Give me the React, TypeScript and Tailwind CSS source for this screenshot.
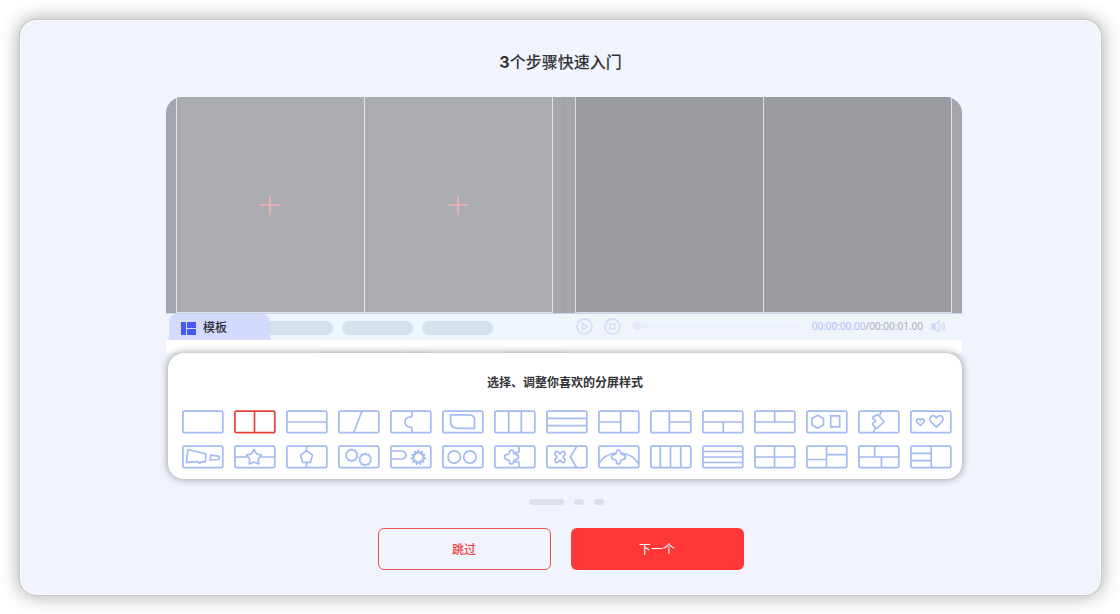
import * as React from "react";

// Points of a regular star; with r === R it is a plain polygon
function star(cx: number, cy: number, R: number, r: number, tips: number, turn = -90) {
  return Array.from({ length: tips * 2 }, (_, i) => {
    const a = ((turn + (i * 180) / tips) * Math.PI) / 180;
    const d = i % 2 ? r : R;
    return `${(cx + d * Math.cos(a)).toFixed(1)},${(cy + d * Math.sin(a)).toFixed(1)}`;
  }).join(" ");
}

const clover =
  "M0-7C1.6-7 2-5.8 2.1-4.6Q2.4-3 3.4-2.8C5.500-2.5 7-1.8 7 0C7 1.8 5.5 2.5 3.4 2.8Q2.4 3 2.1 4.6C2 5.8 1.6 7 0 7C-1.6 7-2 5.8-2.1 4.6Q-2.4 3-3.4 2.8C-5.5 2.5-7 1.8-7 0C-7-1.8-5.5-2.5-3.4-2.8Q-2.4-3-2.1-4.6C-2-5.8-1.6-7 0-7Z";

const quatrefoil =
  "M0-3.2C1-4.6 2.8-6.3 4.4-5.2C6-3.800 4.6-1.6 3 0C4.6 1.6 6 3.8 4.4 5.2C2.8 6.3 1 4.6 0 3.2C-1 4.6-2.8 6.3-4.4 5.2C-6 3.8-4.6 1.6-3 0C-4.6-1.6-6-3.8-4.4-5.2C-2.8-6.3-1-4.6 0-3.2Z";

const templates: { name: string; art: React.ReactNode }[] = [
  { name: "单屏", art: null },
  { name: "左右分屏", art: <path d="M20.5 1v22" /> },
  { name: "上下分屏", art: <path d="M1 12h40" /> },
  { name: "斜线分屏", art: <path d="M24 1L15.5 23" /> },
  { name: "拼图分屏", art: <path d="M22 1v4.5q0 1.5-2 1.5a4.8 4.8 0 0 0 0 10q2 0 2 1.5V23" /> },
  { name: "叶形", art: <path d="M8.5 4.8H27q5.5 0 5.5 5.500v8H16q-7.5 0-7.5-7z" /> },
  { name: "三列", art: <path d="M14.7 1v22M27.3 1v22" /> },
  { name: "三行", art: <path d="M1 8.3h40M1 15.7h40" /> },
  { name: "左二右一", art: <path d="M22.7 1v22M1 12h21.7" /> },
  { name: "左一右二", art: <path d="M19.3 1v22M19.3 12H41" /> },
  { name: "上一下二", art: <path d="M1 12h40M21.3 12v11" /> },
  { name: "上二下一", art: <path d="M1 12h40M20.7 1v11" /> },
  {
    name: "六边形与矩形",
    art: (
      <>
        <path d="M11.7 5.2l5.8 3.2v6.6l-5.8 3.2-5.8-3.2V8.4z" />
        <path d="M24.7 5.9h9v11h-9z" />
      </>
    ),
  },
  {
    name: "心形分屏",
    art: <path d="M23.3 1l-1.5 4.2M19.5 4.5l6.7 7-6.7 6.4q-1.8.8-3-1t-2-2.6q-.2-1 1.2-1.8t2-1.3q-.3-1.5-1.7-1.9t-1.5-1.6q1-1.4 2.1-1.6t2.9-1.6zM17.2 17.6L15.2 23" />,
  },
  {
    name: "双心",
    art: (
      <>
        <path d="M10.4 15.5L7.4 12.7C5.7 11 6.8 8.8 8.5 8.8q1.3 0 1.9 1.2.7-1.2 2-1.2c1.7 0 2.7 2.2 1 3.9z" />
        <path d="M26.4 17.2l-5.1-5C18.4 9 20.2 5.6 23 5.6q2.3 0 3.4 2.2 1.2-2.2 3.5-2.2c2.8 0 4.5 3.4 1.6 6.6z" />
      </>
    ),
  },
  {
    name: "梯形",
    art: (
      <path d="M6 4.5l18 4.3-.6 8h-4l-1.7 1.5-1.6-1.7-11.7.7zM28.8 10.2l8.5 1.2-.3 3.1-8.9.5z" />
    ),
  },
  {
    name: "星形",
    art: (
      <>
        <path d="M1 12h12.5M26.5 12H41" />
        <polygon points={star(20, 12.5, 8, 4.5, 5)} />
      </>
    ),
  },
  {
    name: "五边形",
    art: (
      <>
        <path d="M20.5 1v4.5M20.5 17.5V23" />
        <path d="M20.5 5.6l6 4.6-2.2 7.2h-7.6l-2.2-7.2z" />
      </>
    ),
  },
  {
    name: "双齿轮",
    art: (
      <>
        <polygon points={star(13.7, 10.3, 6, 5.2, 10)} />
        <polygon points={star(27.2, 14.5, 6, 5.2, 10)} />
      </>
    ),
  },
  {
    name: "标签与太阳",
    art: (
      <>
        <path d="M1 6h11.5q3.5 1 3.5 4t-3.5 4H1" />
        <polygon points={star(28.4, 12.4, 7, 4.3, 11)} />
      </>
    ),
  },
  {
    name: "双圆",
    art: (
      <>
        <circle cx="12.2" cy="12" r="6.2" />
        <circle cx="27.9" cy="12" r="6.2" />
      </>
    ),
  },
  {
    name: "花形分屏",
    art: (
      <>
        <path d={clover} transform="translate(17.5 12)" />
        <path d="M25 1v5.5q-.3 1.5-2 1t-2.4.7M25 23v-5q-.3-1.7-2-1.3t-2.4-.7" />
      </>
    ),
  },
  {
    name: "花形与箭头",
    art: (
      <>
        <path d={quatrefoil} transform="translate(14 12)" />
        <path d="M31 1l-6.7 11L31 23" />
      </>
    ),
  },
  {
    name: "弧形花",
    art: (
      <>
        <path d="M1 18.5Q6.5 9.3 17.5 8M23.5 8Q34.5 9.3 40.5 18.5" />
        <path d={clover} transform="translate(20.5 12)" />
      </>
    ),
  },
  { name: "四列", art: <path d="M10.3 1v22M20.5 1v22M30.7 1v22" /> },
  { name: "四行", art: <path d="M1 6.5h40M1 12h40M1 17.5h40" /> },
  { name: "四格", art: <path d="M20.5 1v22M1 12h40" /> },
  { name: "错位四格", art: <path d="M20.5 1v22M1 14.5h19.5M20.5 9.7H41" /> },
  { name: "砖形四格", art: <path d="M1 12h40M16.7 1v11M23.5 12v11" /> },
  { name: "左三右一", art: <path d="M21.3 1v22M1 8.3h20.3M1 15.7h20.3" /> },
];

function TemplateButton({ name, active, onClick, children }: {
  name: string;
  active: boolean;
  onClick: () => void;
  children: React.ReactNode;
}) {
  return (
    <button
      aria-label={name}
      aria-pressed={active}
      onClick={onClick}
      className={active ? "text-[#e5403c]" : "text-[#a3bbf2]"}
    >
      <svg
        viewBox="0 0 42 24"
        className="block h-6 w-[42px]"
        fill="none"
        stroke="currentColor"
        strokeWidth="1.7"
        strokeLinejoin="round"
      >
        <rect x="0.9" y="1.2" width="39.9" height="21.4" rx="1.2" />
        {children}
      </svg>
    </button>
  );
}

function Plus() {
  return (
    <svg viewBox="0 0 20 20" className="h-5 w-5" stroke="#f4b4b7" strokeWidth="1.5">
      <path d="M10 0v20M0 10h20" />
    </svg>
  );
}

function Preview() {
  return (
    <div className="flex h-[216px] overflow-hidden rounded-t-2xl">
      <div className="w-1/2 bg-[#a5a6ab] pl-[10px] pr-[11px]">
        <div className="grid h-full grid-cols-2 divide-x divide-[#e3e4e8] border-x border-b border-[#e3e4e8] bg-[#abacb1]">
          <button aria-label="添加左侧视频" className="flex items-center justify-center"><Plus /></button>
          <button aria-label="添加右侧视频" className="flex items-center justify-center"><Plus /></button>
        </div>
      </div>
      <div className="w-1/2 border-l border-[#9d9ea3] bg-[#a5a6ab] pl-[10px] pr-[10px]">
        <div className="grid h-full grid-cols-2 divide-x divide-[#dcdde1] border-x border-b border-[#dcdde1] bg-[#9b9ca1]">
          <div />
          <div />
        </div>
      </div>
    </div>
  );
}

function Toolbar() {
  return (
    <div className="flex h-[27px] border-t border-[#c9d5ee]">
      <div className="flex w-1/2 items-center bg-[#eef6fe]">
        <div className="z-10 flex h-full items-end">
          <svg viewBox="0 0 3 4" className="h-1 w-[3px]" fill="#d4d9fe"><path d="M3 0v4H0q3-.5 3-4z" /></svg>
          <button className="flex h-full w-[101px] items-center gap-[7px] rounded-t-lg bg-[#d4d9fe] pl-3 pt-0.5 text-xs font-medium text-[#2b2d33]">
            <svg viewBox="0 0 15 13" className="h-[13px] w-[15px]" fill="#4458fb">
              <path d="M0 0h5v13H0zM6 0h9v6H6zM6 7h9v6H6z" />
            </svg>
            模板
          </button>
          <svg viewBox="0 0 3 4" className="h-1 w-[3px]" fill="#d4d9fe"><path d="M0 0v4h3q-3-.5-3-4z" /></svg>
        </div>
        <div className="-ml-[11px] flex gap-[9px] pt-0.5">
          <div className="h-[14px] w-[71px] rounded-full bg-[#d5e1ec]" />
          <div className="h-[14px] w-[71px] rounded-full bg-[#d5e1ec]" />
          <div className="h-[14px] w-[71px] rounded-full bg-[#d5e1ec]" />
        </div>
      </div>

      <div className="flex w-1/2 items-center bg-[#eff5fb] pb-0.5 pl-3 pr-4">
        <button aria-label="播放">
          <svg viewBox="0 0 17 17" className="block h-[17px] w-[17px]" fill="none" stroke="#d3daf9" strokeWidth="1.5">
            <circle cx="8.5" cy="8.5" r="7.500" />
            <path d="M6.5 5.3v6.4l5-3.2z" />
          </svg>
        </button>
        <button aria-label="停止" className="ml-[11px]">
          <svg viewBox="0 0 17 17" className="block h-[17px] w-[17px]" fill="none" stroke="#d3daf9" strokeWidth="1.5">
            <circle cx="8.5" cy="8.5" r="7.5" />
            <path d="M6 6h5v5H6z" />
          </svg>
        </button>
        <div className="ml-3 flex flex-1 items-center">
          <div className="h-2 w-2 rounded-full bg-[#e2e8f5]" />
          <div className="h-[3px] flex-1 bg-[#e9f0fa]" />
        </div>
        <div className="ml-[14px] font-['Noto_Sans',sans-serif] text-[10px] text-[#a9adb4]">
          <span className="text-[#afbdfb]">00:00:00.00</span>/00:00:01.00
        </div>
        <button aria-label="音量" className="ml-2">
          <svg viewBox="0 0 15 13" className="block h-[13px] w-[15px]" fill="none" stroke="#ced8f8" strokeWidth="1.3">
            <path d="M1 4h2.5v5H1z" fill="#ced8f8" />
            <path d="M4 4l4-3v11L4 9zM10.3 4.3q1.5 2.2 0 4.4M12.3 2.500q2.5 4 0 8" />
          </svg>
        </button>
      </div>
    </div>
  );
}

export default function App() {
  const [selected, setSelected] = React.useState(1);

  return (
    <main className="bg-white pb-[18px] pl-5 pr-[19px] pt-5 font-['Inter','Noto_Sans_CJK_SC',sans-serif] text-[#333438]">
      <section
        aria-labelledby="guide-title"
        className="rounded-2xl border border-[#fbfcff] bg-[#f1f4fc] pb-6 pt-[29px] shadow-[0_0_0_1px_#c9cacf,0_0_20px_rgba(0,0,0,0.38)]"
      >
        <h1 id="guide-title" className="text-center text-base font-medium">
          <span className="font-bold">3</span>个步骤快速入门
        </h1>

        <div className="mt-[23px] pl-[145px] pr-[138px]">
          <Preview />
          <Toolbar />
          {/* top of the timeline, mostly hidden by the panel */}
          <div className="flex h-[13px] items-end bg-white pl-[151px]">
            <div className="h-0.5 w-[65px] bg-[#f5f5f6]" />
            <div className="ml-1 h-0.5 w-[18px] bg-[#f5f5f6]" />
            <div className="ml-1 h-0.5 w-[21px] bg-[#f5f5f6]" />
            <div className="ml-[73px] h-0.5 w-[62px] bg-[#f5f5f6]" />
          </div>

          <div className="relative ml-0.5 rounded-2xl bg-white pb-[10px] pt-5 shadow-[0_0_7px_1px_rgba(0,0,0,0.32)]">
            <h2 className="text-center text-xs leading-5 font-bold">选择、调整你喜欢的分屏样式</h2>
            <div className="mt-[17px] grid grid-cols-[repeat(15,42px)] justify-between gap-y-[11px] pl-[14px] pr-[10px]">
              {templates.map((t, i) => (
                <TemplateButton key={t.name} name={t.name} active={i === selected} onClick={() => setSelected(i)}>
                  {t.art}
                </TemplateButton>
              ))}
            </div>
          </div>
        </div>

        <div className="mt-5 flex justify-center gap-[10px] pl-3">
          <div className="h-1.5 w-[35px] rounded-full bg-[#dde0e8]" />
          <div className="h-1.5 w-[10px] rounded-full bg-[#dde0e8]" />
          <div className="h-1.5 w-[10px] rounded-full bg-[#dde0e8]" />
        </div>

        <div className="mt-[23px] flex justify-center gap-5">
          <button className="h-[42px] w-[173px] rounded-md border border-[#e8504f] pt-0.5 text-xs font-medium text-[#ec4342]">
            跳过
          </button>
          <button className="h-[42px] w-[173px] rounded-md bg-[#ff3737] pt-0.5 text-xs text-white">
            下一个
          </button>
        </div>
      </section>
    </main>
  );
}
